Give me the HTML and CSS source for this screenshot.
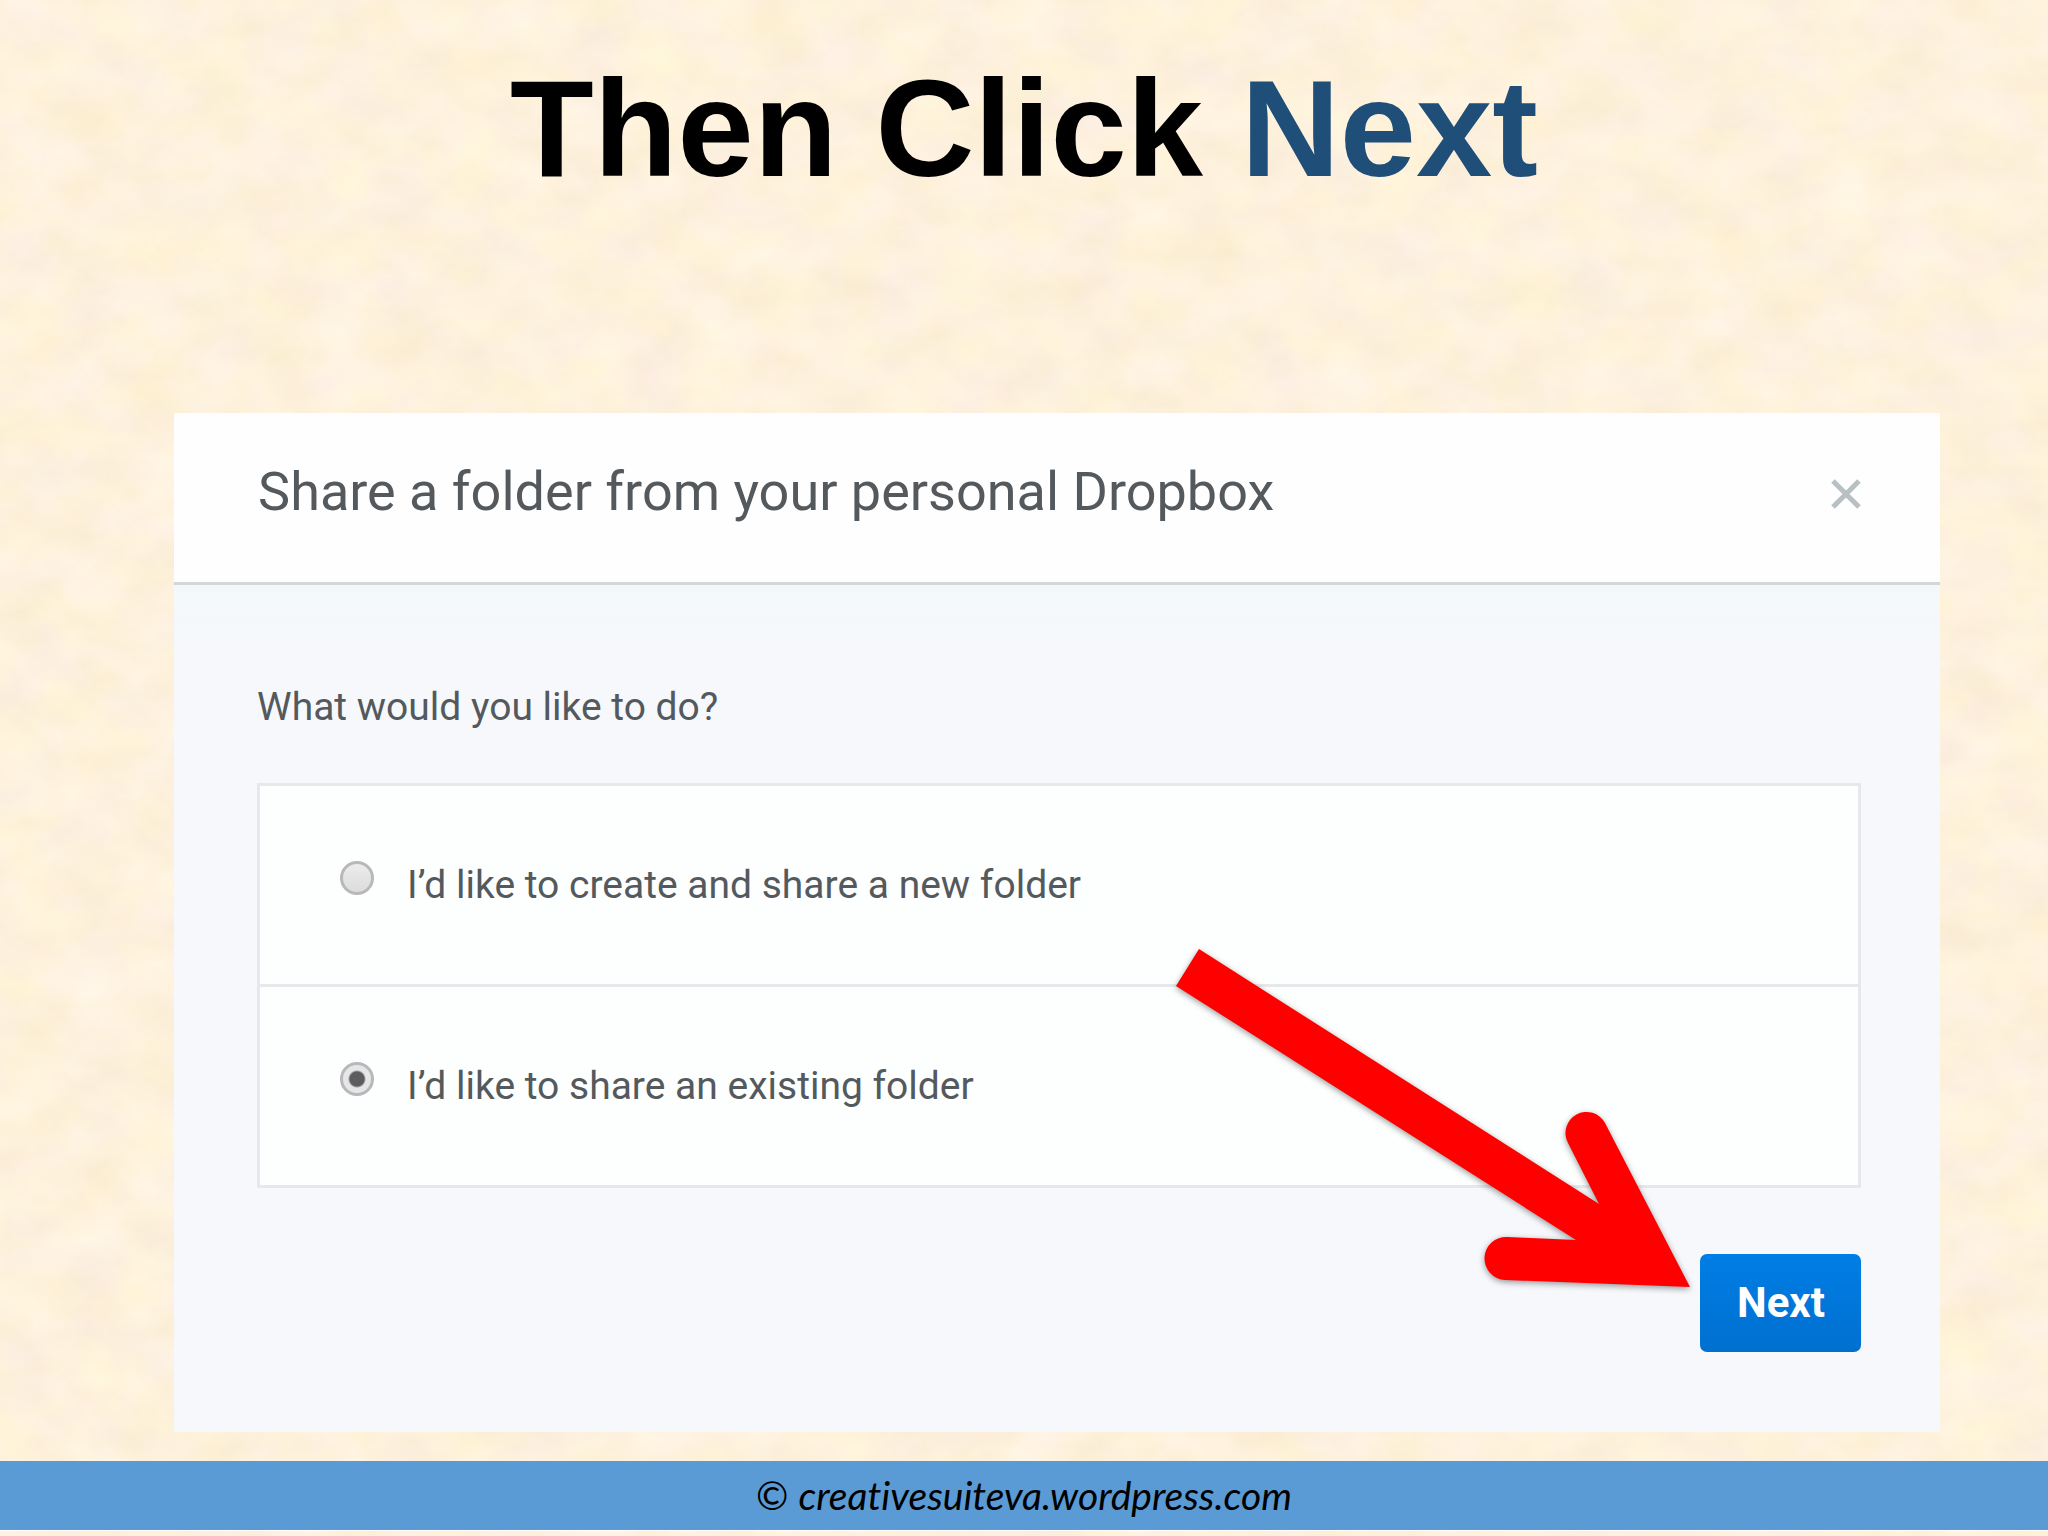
FILE: index.html
```html
<!DOCTYPE html>
<html lang="en">
    <head>
        <meta charset="utf-8">
        <title>Then Click Next</title>
        <link rel="stylesheet" href="styles.css">
    </head>
    <body>
        <!-- Parchment texture -->
        <svg class="paper" aria-hidden="true">
            <filter id="parchment" x="0" y="0" width="100%" height="100%" color-interpolation-filters="sRGB">
                <feTurbulence type="fractalNoise" baseFrequency="0.016 0.022" numOctaves="4" seed="7" />
                <feColorMatrix values="0.04 0 0 0 0.974
                                       0.05 0.02 0 0 0.911
                                       0.05 0 0.09 0 0.794
                                       0 0 0 0 1" />
            </filter>
            <rect width="100%" height="100%" filter="url(#parchment)" />
        </svg>

        <div class="slide">
            <h1 class="slide-title">Then Click <span>Next</span></h1>

            <form class="dialog">
                <div class="dialog-header">
                    <h2>Share a folder from your personal Dropbox</h2>
                    <button type="button" class="close" aria-label="Close">
                        <svg viewBox="0 0 30 30">
                            <path d="M2 2 L28 28 M28 2 L2 28" />
                        </svg>
                    </button>
                </div>

                <div class="dialog-body">
                    <p class="question">What would you like to do?</p>
                    <div class="options">
                        <label class="option">
                            <input type="radio" name="share" value="new">
                            <span>I’d like to create and share a new folder</span>
                        </label>
                        <label class="option">
                            <input type="radio" name="share" value="existing" checked>
                            <span>I’d like to share an existing folder</span>
                        </label>
                    </div>
                    <div class="actions">
                        <button type="button" class="next">Next</button>

                        <!-- Arrow pointing at the button -->
                        <svg class="arrow" viewBox="0 0 530 350">
                            <path d="M33 9 L433 264 L402 203 A21 21 0 0 1 439 183 L524 347 L339 340 A21 21 0 0 1 341 297 L410 300 L10 46 Z" />
                        </svg>
                    </div>
                </div>
            </form>

            <footer class="credit">© <em>creativesuiteva.wordpress.com</em></footer>
        </div>
    </body>
</html>
```
FILE: styles.css
```css
* {
    box-sizing: border-box;
}

body {
    margin: 0;
    background: #fef1dc;
    font-family: Roboto, 'Liberation Sans', sans-serif;
    color: #54595d;
}

.paper {
    position: absolute;
    top: 0;
    left: 0;
    width: 100%;
    height: 100%;
}

.slide {
    position: relative;
    min-height: 100vh;
    display: flex;
    flex-direction: column;
    padding-bottom: 6px;
}

.slide-title {
    margin: 49px 0 204px;
    font: bold 137px/160px 'Liberation Sans', Arial, sans-serif;
    text-align: center;
    color: #000;
}

.slide-title span {
    color: #1f4e79;
}

.dialog {
    margin: 0 5.25% 0 8.5%;
    background: #f6f8fc;
}

.dialog-header {
    display: flex;
    justify-content: space-between;
    align-items: center;
    padding: 47px 79px 58px 84px;
    border-bottom: 3px solid #d2d7da;
    background: #fefefe;
}

.dialog-header h2 {
    margin: 0;
    font-size: 54px;
    font-weight: 400;
    line-height: 64px;
}

.close {
    width: 30px;
    height: 30px;
    margin-top: 4px;
    padding: 0;
    border: none;
    background: none;
    cursor: pointer;
}

.close svg {
    display: block;
}

.close path {
    fill: none;
    stroke: #b9c0c3;
    stroke-width: 5;
}

.dialog-body {
    padding: 98px 79px 80px 83px;
    background: linear-gradient(#f3f9fa, #f6f8fc 60px);
}

.question {
    margin: 0 0 52px;
    font-size: 39px;
    line-height: 48px;
}

.options {
    border: 3px solid #e6e8ec;
    background: #fdfefe;
}

.option {
    display: flex;
    align-items: center;
    gap: 33px;
    padding: 75px 80px;
    font-size: 39px;
    line-height: 48px;
}

.option + .option {
    border-top: 3px solid #e6e8ec;
}

.option input {
    appearance: none;
    width: 34px;
    height: 34px;
    margin: 0 0 14px;
    border: 3px solid #b8b8ba;
    border-radius: 50%;
    background: linear-gradient(#ececec, #dcdcde);
}

.option input:checked {
    background: radial-gradient(circle, #5c5c5e 7px, #e6e6e8 9px);
}

.actions {
    position: relative;
    display: flex;
    justify-content: flex-end;
    margin-top: 66px;
}

.next {
    width: 161px;
    height: 98px;
    border: none;
    border-radius: 7px;
    background: linear-gradient(#007ee5, #0070d0);
    color: #fff;
    font: bold 42px/48px Roboto, 'Liberation Sans', sans-serif;
    cursor: pointer;
}

.arrow {
    position: absolute;
    right: 165px;
    bottom: 62px;
    width: 530px;
    height: 350px;
    overflow: visible;
    pointer-events: none;
    filter: drop-shadow(0 2px 3px rgba(0, 0, 0, 0.4));
}

.arrow path {
    fill: #f00;
}

.credit {
    margin-top: auto;
    padding: 10px 0 11px;
    background: #5b9bd5;
    box-shadow: 0 1px #fff;
    font-family: Lato, 'Open Sans', sans-serif;
    font-size: 39px;
    font-variant-ligatures: none;
    line-height: 48px;
    text-align: center;
    color: #000;
}
```
